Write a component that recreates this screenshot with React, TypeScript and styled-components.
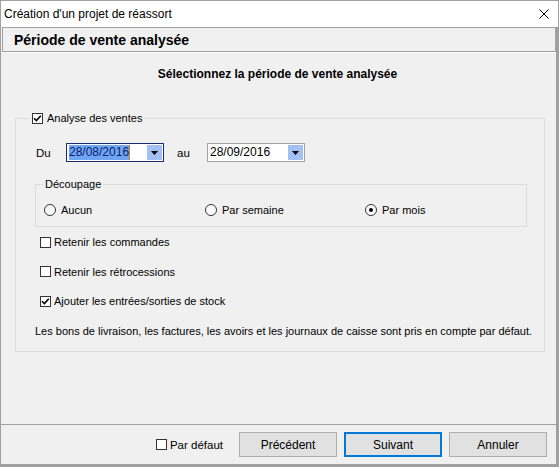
import React from "react";
import styled, { createGlobalStyle } from "styled-components";

const Global = createGlobalStyle`
  html, body { margin: 0; padding: 0; background: #ffffff; }
  * { box-sizing: border-box; }
`;

const FONT = `"Liberation Sans", Arial, sans-serif`;

const Window = styled.div`
  width: 559px;
  height: 467px;
  border: 1px solid #a0a0a0;
  background: #f0f0f0;
  display: flex;
  flex-direction: column;
  font-family: ${FONT};
  font-size: 11px;
  color: #000;
`;

const TitleBar = styled.div`
  height: 26px;
  background: #ffffff;
  display: flex;
  align-items: center;
  justify-content: space-between;
  padding: 0 9px 0 3px;
  font-size: 12px;
  flex: none;
`;

const Body = styled.div`
  flex: 1;
  display: flex;
  flex-direction: column;
  border-right: 2px solid #a0a0a0;
  border-bottom: 2px solid #a0a0a0;
  min-height: 0;
`;

const HeaderBox = styled.div`
  height: 25px;
  margin-left: 1px;
  border: 1px solid #a0a0a0;
  display: flex;
  align-items: center;
  padding-left: 11px;
  font-size: 14px;
  font-weight: bold;
  flex: none;
`;

const WhiteLine = styled.div`
  height: 1px;
  background: #ffffff;
  flex: none;
`;

const Content = styled.div`
  flex: 1;
  display: flex;
  flex-direction: column;
  padding-top: 14px;
`;

const Subtitle = styled.div`
  text-align: center;
  font-weight: bold;
  font-size: 12px;
  line-height: 14px;
  padding-right: 2px;
`;

const Group = styled.fieldset<{ $mt: number; $ml: number; $mr: number }>`
  margin: ${(p) => p.$mt}px ${(p) => p.$mr}px 0 ${(p) => p.$ml}px;
  padding: 0;
  border: 1px solid #dcdcdc;
  min-inline-size: 0;
  display: flex;
  flex-direction: column;
`;

const Legend = styled.legend<{ $ml: number }>`
  margin-left: ${(p) => p.$ml}px;
  padding: 0 2px;
  line-height: 14px;
  display: flex;
  align-items: center;
  gap: 4px;
`;

const Box = styled.span`
  width: 11px;
  height: 11px;
  border: 1px solid #333333;
  background: #ffffff;
  display: inline-flex;
  align-items: center;
  justify-content: center;
  flex: none;
`;

const Check = ({ on }: { on?: boolean }) => (
  <Box>
    {on && (
      <svg width="9" height="9" viewBox="0 0 9 9">
        <path d="M1 4.2 L3.4 6.6 L7.8 1.8" fill="none" stroke="#000" strokeWidth="1.6" />
      </svg>
    )}
  </Box>
);

const DateRow = styled.div`
  display: flex;
  align-items: center;
  margin-top: 18px;
  padding-left: 20px;
`;

const FieldLabel = styled.span<{ $w: number; $ml?: number }>`
  width: ${(p) => p.$w}px;
  margin-left: ${(p) => p.$ml ?? 0}px;
  font-size: 11.5px;
`;

const DateInput = styled.div<{ $focus?: boolean }>`
  width: 98px;
  height: 19px;
  border: 1px solid ${(p) => (p.$focus ? "#1a2a78" : "#a3a3a3")};
  background: #ffffff;
  display: flex;
  align-items: center;
  padding: 0 1px 0 2px;
  font-size: 12px;
`;

const DateText = styled.span<{ $sel?: boolean }>`
  flex: 1;
  display: flex;
  align-items: center;
  & > span {
    background: ${(p) => (p.$sel ? "#6fa6f4" : "transparent")};
    color: ${(p) => (p.$sel ? "#0d1d6a" : "#000")};
    line-height: 15px;
    ${(p) => (p.$sel ? "border-right: 1px solid #e07a1a;" : "")}
  }
`;

const DropBtn = styled.span`
  width: 15px;
  height: 15px;
  background: #a2c0f4;
  display: flex;
  align-items: center;
  justify-content: center;
`;

const Caret = () => (
  <svg width="7" height="4" viewBox="0 0 7 4">
    <path d="M0 0 H7 L3.5 4 Z" fill="#000" />
  </svg>
);

const LegendText = styled.span`
  font-size: 11px;
`;

const RadioRow = styled.div`
  display: grid;
  grid-template-columns: 161px 160px auto;
  padding: 12px 0 9px 8px;
`;

const RadioItem = styled.label`
  display: flex;
  align-items: center;
  gap: 5px;
  line-height: 14px;
`;

const RadioCircle = styled.span`
  width: 12px;
  height: 12px;
  border-radius: 50%;
  border: 1px solid #333333;
  background: #ffffff;
  display: inline-flex;
  align-items: center;
  justify-content: center;
  & > i {
    width: 4px;
    height: 4px;
    border-radius: 50%;
    background: #000;
  }
`;

const Radio = ({ label, on }: { label: string; on?: boolean }) => (
  <RadioItem>
    <RadioCircle>{on && <i />}</RadioCircle>
    {label}
  </RadioItem>
);

const Options = styled.div`
  display: flex;
  flex-direction: column;
  gap: 15.5px;
  margin-top: 8px;
  padding: 0 0 13px 19px;
`;

const CheckRow = styled.label`
  display: flex;
  align-items: center;
  gap: 3px;
  line-height: 14px;
  padding-left: 5px;
`;

const Note = styled.div`
  line-height: 14px;
`;

const Footer = styled.div`
  height: 40px;
  border-top: 1px solid #a0a0a0;
  display: flex;
  justify-content: flex-end;
  align-items: flex-start;
  padding: 7px 9px 0 0;
  flex: none;
`;

const DefaultCheck = styled.label`
  display: flex;
  align-items: center;
  gap: 3px;
  height: 25px;
  margin-right: 9px;
  font-size: 11.5px;
`;

const Button = styled.button<{ $primary?: boolean }>`
  width: 98px;
  height: 25px;
  margin-left: 7px;
  background: #e1e1e1;
  border: ${(p) => (p.$primary ? "2px solid #0078d7" : "1px solid #adadad")};
  font-family: ${FONT};
  font-size: 12px;
  color: #000;
  padding: 0;
`;

export default function App() {
  return (
    <>
      <Global />
      <Window>
        <TitleBar>
          <span>Création d'un projet de réassort</span>
          <svg width="10" height="10" viewBox="0 0 10 10">
            <path d="M0.5 0.5 L9.5 9.5 M9.5 0.5 L0.5 9.5" stroke="#000" strokeWidth="1" />
          </svg>
        </TitleBar>
        <Body>
          <HeaderBox>Période de vente analysée</HeaderBox>
          <WhiteLine />
          <Content>
            <Subtitle>Sélectionnez la période de vente analysée</Subtitle>
            <Group $mt={30} $ml={14} $mr={11}>
              <Legend $ml={14}>
                <Check on />
                <LegendText>Analyse des ventes</LegendText>
              </Legend>
              <DateRow>
                <FieldLabel $w={30}>Du</FieldLabel>
                <DateInput $focus>
                  <DateText $sel>
                    <span>28/08/2016</span>
                  </DateText>
                  <DropBtn>
                    <Caret />
                  </DropBtn>
                </DateInput>
                <FieldLabel $w={30} $ml={13}>au</FieldLabel>
                <DateInput>
                  <DateText>
                    <span>28/09/2016</span>
                  </DateText>
                  <DropBtn>
                    <Caret />
                  </DropBtn>
                </DateInput>
              </DateRow>
              <Group $mt={15} $ml={19} $mr={17}>
                <Legend $ml={7}>
                  <LegendText>Découpage</LegendText>
                </Legend>
                <RadioRow>
                  <Radio label="Aucun" />
                  <Radio label="Par semaine" />
                  <Radio label="Par mois" on />
                </RadioRow>
              </Group>
              <Options>
                <CheckRow>
                  <Check />
                  Retenir les commandes
                </CheckRow>
                <CheckRow>
                  <Check />
                  Retenir les rétrocessions
                </CheckRow>
                <CheckRow>
                  <Check on />
                  Ajouter les entrées/sorties de stock
                </CheckRow>
                <Note>
                  Les bons de livraison, les factures, les avoirs et les journaux de caisse sont pris en compte par défaut.
                </Note>
              </Options>
            </Group>
          </Content>
          <Footer>
            <DefaultCheck>
              <Check />
              Par défaut
            </DefaultCheck>
            <Button>Précédent</Button>
            <Button $primary>Suivant</Button>
            <Button>Annuler</Button>
          </Footer>
        </Body>
      </Window>
    </>
  );
}
